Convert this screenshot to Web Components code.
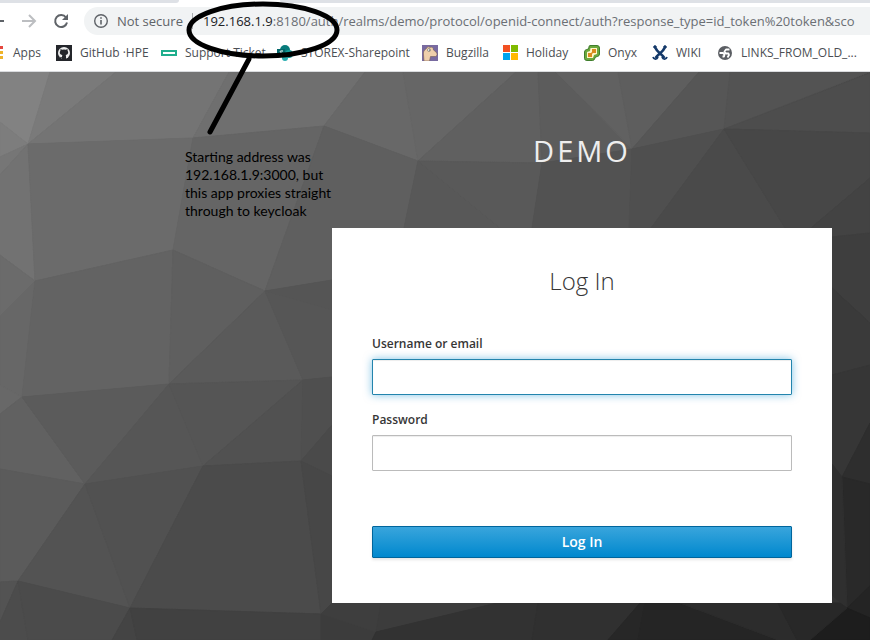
<!DOCTYPE html>
<html lang="en">
<head>
<meta charset="utf-8">
<title>Log in to demo</title>
<style>
html,body{margin:0;height:100%}
body{min-height:100vh;font-family:"Open Sans","Noto Sans",sans-serif;background:#fff}
</style>
</head>
<body>
<demo-window></demo-window>

<template id="t-window">
<style>
:host{display:flex;flex-direction:column;min-height:100vh;position:relative;overflow:hidden}
</style>
<tab-strip></tab-strip>
<address-bar></address-bar>
<bookmark-bar></bookmark-bar>
<login-page></login-page>
<hand-note>Starting address was<br>192.168.1.9:3000, but<br>this app proxies straight<br>through to keycloak</hand-note>
</template>

<template id="t-tabs">
<style>
:host{display:grid;grid-template-columns:179px 101px 1fr;height:3px;background:#fff}
div{background:#dee1e6}
.l{border-bottom-right-radius:4px}.r{grid-column:3;border-bottom-left-radius:4px}
</style>
<div class="l"></div><div class="r"></div>
</template>

<template id="t-address">
<style>
:host{display:flex;align-items:center;height:36px;background:#fff;color:#5f6368;overflow:hidden}
button{border:0;background:none;padding:0;display:block;flex:none;color:inherit;height:20px}
svg{display:block}
.back{width:20px;overflow:hidden}
.fwd{width:20px;color:#bcbec1}
.re{width:20px;margin:0 13px 0 11px}
.pill{flex:1;min-width:0;display:flex;align-items:center;height:28px;background:#f1f3f4;border-radius:14px 0 0 14px;padding-left:9px;overflow:hidden;white-space:nowrap;font-size:13px}
.sec{flex:none;display:flex;align-items:center;gap:8px;width:99px}
.url{flex:none;display:flex;align-items:center;color:#6b6f74}
.url::before{content:"";width:1px;height:16px;margin-right:10px;background:#a9acb0}
.url b{font-weight:400;color:#202124}
</style>
<button class="back" aria-label="Back"><svg width="20" height="20" viewBox="0 0 20 20"><path d="M-10 10H4" stroke="currentColor" stroke-width="2"/></svg></button>
<button class="fwd" aria-label="Forward"><svg width="20" height="20" viewBox="0 0 20 20" fill="none" stroke="currentColor" stroke-width="2"><path d="M2 10H15M9 4l6 6-6 6"/></svg></button>
<button class="re" aria-label="Reload"><svg width="20" height="20" viewBox="0 0 20 20"><path d="M15 6.5A6 6 0 1 0 16 11.5" fill="none" stroke="currentColor" stroke-width="2"/><path d="M17 3v6h-6z" fill="currentColor"/></svg></button>
<div class="pill">
<span class="sec"><svg width="16" height="16" viewBox="0 0 16 16"><circle cx="8" cy="8" r="6.3" fill="none" stroke="currentColor" stroke-width="1.4"/><path d="M8 7v4.500M8 4.200v1.600" stroke="currentColor" stroke-width="1.6"/></svg>Not secure</span>
<span class="url"><span><b>192.168.1.9</b>:8180/auth/realms/demo/protocol/openid-connect/auth?response_type=id_token%20token&amp;sco</span></span>
</div>
</template>

<template id="t-bookmarks">
<style>
:host{box-sizing:border-box;display:grid;grid-template-columns:53px 105px 116px 145px 80px 82px 68px 65px 1fr;align-items:center;height:33px;padding:0 0 4px 3px;border-bottom:1px solid #d9dbde;background:#fff;overflow:hidden}
</style>
<book-mark label="Apps" style="--gap:10px"><svg slot="icon" width="3" height="16" viewBox="0 0 3 16" style="margin-left:-3px"><path fill="#e5473e" d="M0 1h3v3H0z"/><path fill="#efb429" d="M0 6h3v3H0z"/><path fill="#eeb32c" d="M0 11h3v3H0z"/></svg></book-mark>
<book-mark label="GitHub ·HPE"><svg slot="icon" width="16" height="16" viewBox="0 0 16 16"><path fill="#24262b" d="M0 0h16v16H0z"/><circle cx="8" cy="8" r="6" fill="#eee"/><path fill="#24262b" d="M4.500 4l1.700.8a6 6 0 0 1 3.600 0l1.700-.8.1 1.800c1.300 2 .3 4-1.900 4.300l.3 1V15H6v-1.800c-1.500.2-1.800-1-2.600-1.500.8-.2 1.400.8 2.500.5l.4-2.100C4 9.800 3.100 7.800 4.400 5.800z"/></svg></book-mark>
<book-mark label="Support Ticket"><svg slot="icon" width="16" height="16" viewBox="0 0 16 16"><path fill="none" stroke="#1fae8d" stroke-width="2" d="M1 6h14v4H1z"/></svg></book-mark>
<book-mark label="STOREX-Sharepoint"><svg slot="icon" width="16" height="16" viewBox="0 0 16 16"><circle cx="8" cy="5" r="5" fill="#087c7c"/><circle cx="12" cy="9" r="4" fill="#159c9b"/><circle cx="8" cy="13" r="3" fill="#29adb0"/><path fill="#04686b" d="M0 4h8v8H0z"/><path d="M6 6H3.500c-1.500 2 2.500 1.500 2 3.500H2.500" fill="none" stroke="#fff"/></svg></book-mark>
<book-mark label="Bugzilla"><svg slot="icon" width="16" height="16" viewBox="0 0 16 16"><path fill="#786aa0" d="M0 0h16v16H0z"/><path fill="#efcfab" stroke="#735a55" stroke-width=".6" d="M2 16 1.500 10C1 7 2 5 4.500 3.500 5 1.500 7 1.500 8 2.500c1.500-1 3.500 0 3.500 2.500l2.500 2c1.500 1.500 1.500 4-.5 4.500H8.500L7.500 16z"/><circle cx="7" cy="5" r="1.500" fill="#fff" stroke="#665" stroke-width=".6"/><circle cx="7.500" cy="5" r=".6" fill="#333"/></svg></book-mark>
<book-mark label="Holiday"><svg slot="icon" width="16" height="16" viewBox="0 0 16 16"><path fill="#f25022" d="M1 0h7v7H1z"/><path fill="#7fba00" d="M9 0h7v7H9z"/><path fill="#00a4ef" d="M1 8h7v7H1z"/><path fill="#ffb900" d="M9 8h7v7H9z"/></svg></book-mark>
<book-mark label="Onyx"><svg slot="icon" width="16" height="16" viewBox="0 0 16 16"><path fill="#6aa83c" stroke="#3f7d2c" d="M6 .5h7q2.500 0 2.500 2.500v6q0 2-2 2.500l-2 .5-1 2q-.5 1.500-2 1.500H3q-2.500 0-2.500-2V7q0-2 2-2.500l2-.5.500-2q0-1.500 1-1.500z"/><path fill="#fff5c9" d="M6.500 3H13v6l-3 1-1 3H3V7l3-1z"/><path fill="#d98b1d" d="M8 4h4v4H8zM4 8h4v4H4z"/><path fill="#fff5c9" d="M7 7h2v2H7z"/><path d="m6 10 4-4" stroke="#d98b1d" stroke-width="1.500"/></svg></book-mark>
<book-mark label="WIKI"><svg slot="icon" width="16" height="16" viewBox="0 0 16 16" fill="none" stroke="#14396a"><path stroke-width="2.600" d="M3.500 3C5 7 9 8 12.500 13M12.500 3C11 7 7 8 3.500 13"/><path stroke-width="1.800" d="M1 12c1 3 4 2.500 5 0M10 12c1 2.500 4 3 5 0"/><circle cx="3" cy="2" r="1.300" fill="#14396a"/><circle cx="13" cy="2" r="1.300" fill="#14396a"/></svg></book-mark>
<book-mark label="LINKS_FROM_OLD_..."><svg slot="icon" width="16" height="16" viewBox="0 0 16 16"><circle cx="8" cy="8" r="7" fill="#5b5e63"/><path fill="none" stroke="#fff" stroke-width="1.800" stroke-linejoin="round" d="M12.500 4.500H9L7.500 6.500 9 8.500h2.500L12 10l-1.500 2.500M2.500 8H6l1.500 1.500-.5 2H5.500"/></svg></book-mark>
</template>

<template id="t-mark">
<style>
:host{display:block;white-space:nowrap}
a{display:flex;align-items:center;gap:var(--gap,8px);color:#4b4e53;text-decoration:none;font-size:12px;line-height:16px}
::slotted(svg){display:block;flex:none}
</style>
<a href="#"><slot name="icon"></slot><span></span></a>
</template>

<template id="t-login">
<style>
:host{flex:1;position:relative;display:flex;justify-content:flex-end;align-items:flex-start;padding:56px 38px 37px;background:#333}
poly-backdrop{position:absolute;inset:0}
main{position:relative;width:500px;max-width:100%}
h1{margin:0 0 55px;line-height:45px;text-align:center;font-size:29px;font-weight:400;letter-spacing:3px;text-transform:uppercase;color:#eee}
form{background:#fff;padding:36px 40px 45px}
h2{margin:0 0 38px;line-height:34px;text-align:center;font-size:24px;font-weight:300;color:#363636}
login-field{margin-bottom:17px}
button{display:block;width:100%;height:32px;margin-top:55px;border:1px solid #00659c;border-radius:1px;background:linear-gradient(#39a5dc,#0088ce);color:#fff;font:600 14px/20px "Open Sans",sans-serif;box-shadow:0 2px 3px rgba(3,3,3,.1)}
</style>
<poly-backdrop></poly-backdrop>
<main>
<h1>demo</h1>
<form>
<h2>Log In</h2>
<login-field label="Username or email" active></login-field>
<login-field label="Password" type="password"></login-field>
<button type="button">Log In</button>
</form>
</main>
</template>

<template id="t-field">
<style>
:host{display:block}
label{display:block;font-size:12px;font-weight:600;line-height:16px;margin-bottom:7px;color:#363636}
input{display:block;box-sizing:border-box;width:100%;height:36px;margin:0;padding:2px 10px;border:1px solid #bbb;border-radius:1px;font:14px "Open Sans",sans-serif;background:#fff;outline:0;box-shadow:inset 0 1px 1px rgba(3,3,3,.075)}
:host([active]) input{border-color:#2384ad;box-shadow:inset 0 1px 1px rgba(3,3,3,.075),0 0 8px rgba(0,136,206,.5)}
</style>
<label for="f"></label><input id="f">
</template>

<template id="t-note">
<style>
:host{position:absolute;inset:0;pointer-events:none;color:#000}
svg{position:absolute;left:0;top:0}
p{position:absolute;left:185px;top:148px;margin:0;font:14px/18px Lato,"Open Sans",sans-serif;white-space:nowrap}
</style>
<svg width="350" height="140" fill="none" stroke="#000"><ellipse cx="263" cy="30" rx="74" ry="26" stroke-width="5"/><path d="M249 59 210 132" stroke-width="5" stroke-linecap="round"/></svg>
<p><slot></slot></p>
</template>

<script>
const stamp = (el, id) => {
  const root = el.attachShadow({ mode: "open" });
  root.append(document.getElementById(id).content.cloneNode(true));
  return root;
};
const simple = (name, id) => customElements.define(name, class extends HTMLElement {
  constructor() { super(); stamp(this, id); }
});

/* Grey level followed by the polygon's corner points. */
const FACETS = [
  [130,"0,72 50,72 28,144 0,122"],[122,"50,72 116,72 28,144"],[116,"116,72 229,72 193,138 28,144"],
  [111,"229,72 365,72 324,126 193,138"],[104,"365,72 403,72 418,161 324,126"],[102,"403,72 516,72 418,161"],
  [96,"516,72 538,72 542,163 418,161"],[92,"538,72 556,72 632,149 542,163"],[97,"556,72 618,72 632,149"],
  [94,"618,72 699,72 632,149"],[86,"699,72 730,72 724,129 632,149"],[83,"730,72 870,72 724,129"],
  [77,"870,73 870,133 724,129"],[125,"0,122 28,144 0,157"],[118,"0,157 28,144 0,175"],
  [114,"0,175 28,144 35,281 0,255"],[107,"28,144 193,138 173,250 35,281"],[101,"193,138 324,126 265,291 173,250"],
  [95,"324,126 418,161 404,228 332,280 265,291"],[88,"418,161 500,228 404,228"],[89,"418,161 542,163 532,228 500,228"],
  [82,"542,163 632,149 629,228 532,228"],[79,"632,149 724,129 651,228 629,228"],[74,"724,129 785,228 651,228"],
  [71,"724,129 870,133 870,178 811,228 785,228"],[67,"811,228 870,178 870,233 832,237"],
  [62,"832,237 870,233 870,323 832,288"],[58,"832,288 870,323 870,365 832,375"],
  [54,"832,375 870,365 870,423 842,477 832,464"],[46,"842,477 870,423 870,484"],[41,"842,477 870,484 870,586 847,608"],
  [47,"832,464 842,477 847,608 832,595"],[36,"847,608 870,586 870,618"],[29,"847,608 870,618 870,640 810,640"],
  [107,"0,255 35,281 0,316"],[103,"0,316 35,281 22,397 0,385"],[104,"0,385 22,397 0,414"],
  [99,"35,281 173,250 169,384 22,397"],[95,"173,250 265,291 169,384"],[90,"265,291 303,380 169,384"],
  [85,"265,291 332,280 332,310"],[86,"265,291 332,310 332,377 303,380"],[97,"22,397 85,484 0,469 0,414"],
  [91,"22,397 169,384 85,484"],[86,"169,384 203,466 85,484"],[85,"169,384 303,380 203,466"],
  [81,"203,466 303,380 301,461"],[79,"303,380 332,377 332,425 301,461"],[74,"301,461 332,425 332,476"],
  [91,"0,469 85,484 18,581 0,582"],[83,"85,484 130,608 18,581"],[81,"85,484 203,466 130,608"],
  [75,"203,466 301,461 321,614 130,608"],[71,"301,461 332,476 332,603 321,614"],[83,"0,582 18,581 0,622"],
  [76,"0,622 18,581 28,640 0,640"],[75,"18,581 130,608 112,640 28,640"],[68,"130,608 137,640 112,640"],
  [65,"130,608 321,614 321,640 137,640"],[60,"321,614 376,632 372,640 321,640"],[62,"321,614 332,603 381,603 376,632"],
  [60,"381,603 497,603 376,632"],[50,"372,640 376,632 497,603 538,603 532,640"],
  [48,"538,603 640,603 608,640 532,640"],[39,"640,603 645,603 638,640 608,640"],[37,"645,603 680,603 778,640 638,640"],
  [44,"680,603 778,603 797,640 778,640"],[40,"778,603 840,603 847,608 810,640 797,640"]
];
customElements.define("poly-backdrop", class extends HTMLElement {
  constructor() {
    super();
    const shapes = FACETS.map(([g, p]) => `<polygon points="${p}" fill="rgb(${g},${g},${g})" stroke="rgb(${g},${g},${g})"/>`).join("");
    this.attachShadow({ mode: "open" }).innerHTML =
      `<style>:host{display:block}svg{display:block;width:100%;height:100%}</style>
       <svg viewBox="0 72 870 568" preserveAspectRatio="xMinYMin slice" aria-hidden="true">${shapes}</svg>`;
  }
});
customElements.define("book-mark", class extends HTMLElement {
  constructor() { super(); this.label = stamp(this, "t-mark").querySelector("span"); }
  connectedCallback() { this.label.textContent = this.getAttribute("label"); }
});
customElements.define("login-field", class extends HTMLElement {
  constructor() { super(); stamp(this, "t-field"); }
  connectedCallback() {
    this.shadowRoot.querySelector("label").textContent = this.getAttribute("label");
    this.shadowRoot.querySelector("input").type = this.getAttribute("type") || "text";
  }
});
simple("tab-strip", "t-tabs");
simple("address-bar", "t-address");
simple("bookmark-bar", "t-bookmarks");
simple("login-page", "t-login");
simple("hand-note", "t-note");
simple("demo-window", "t-window");
</script>
</body>
</html>
